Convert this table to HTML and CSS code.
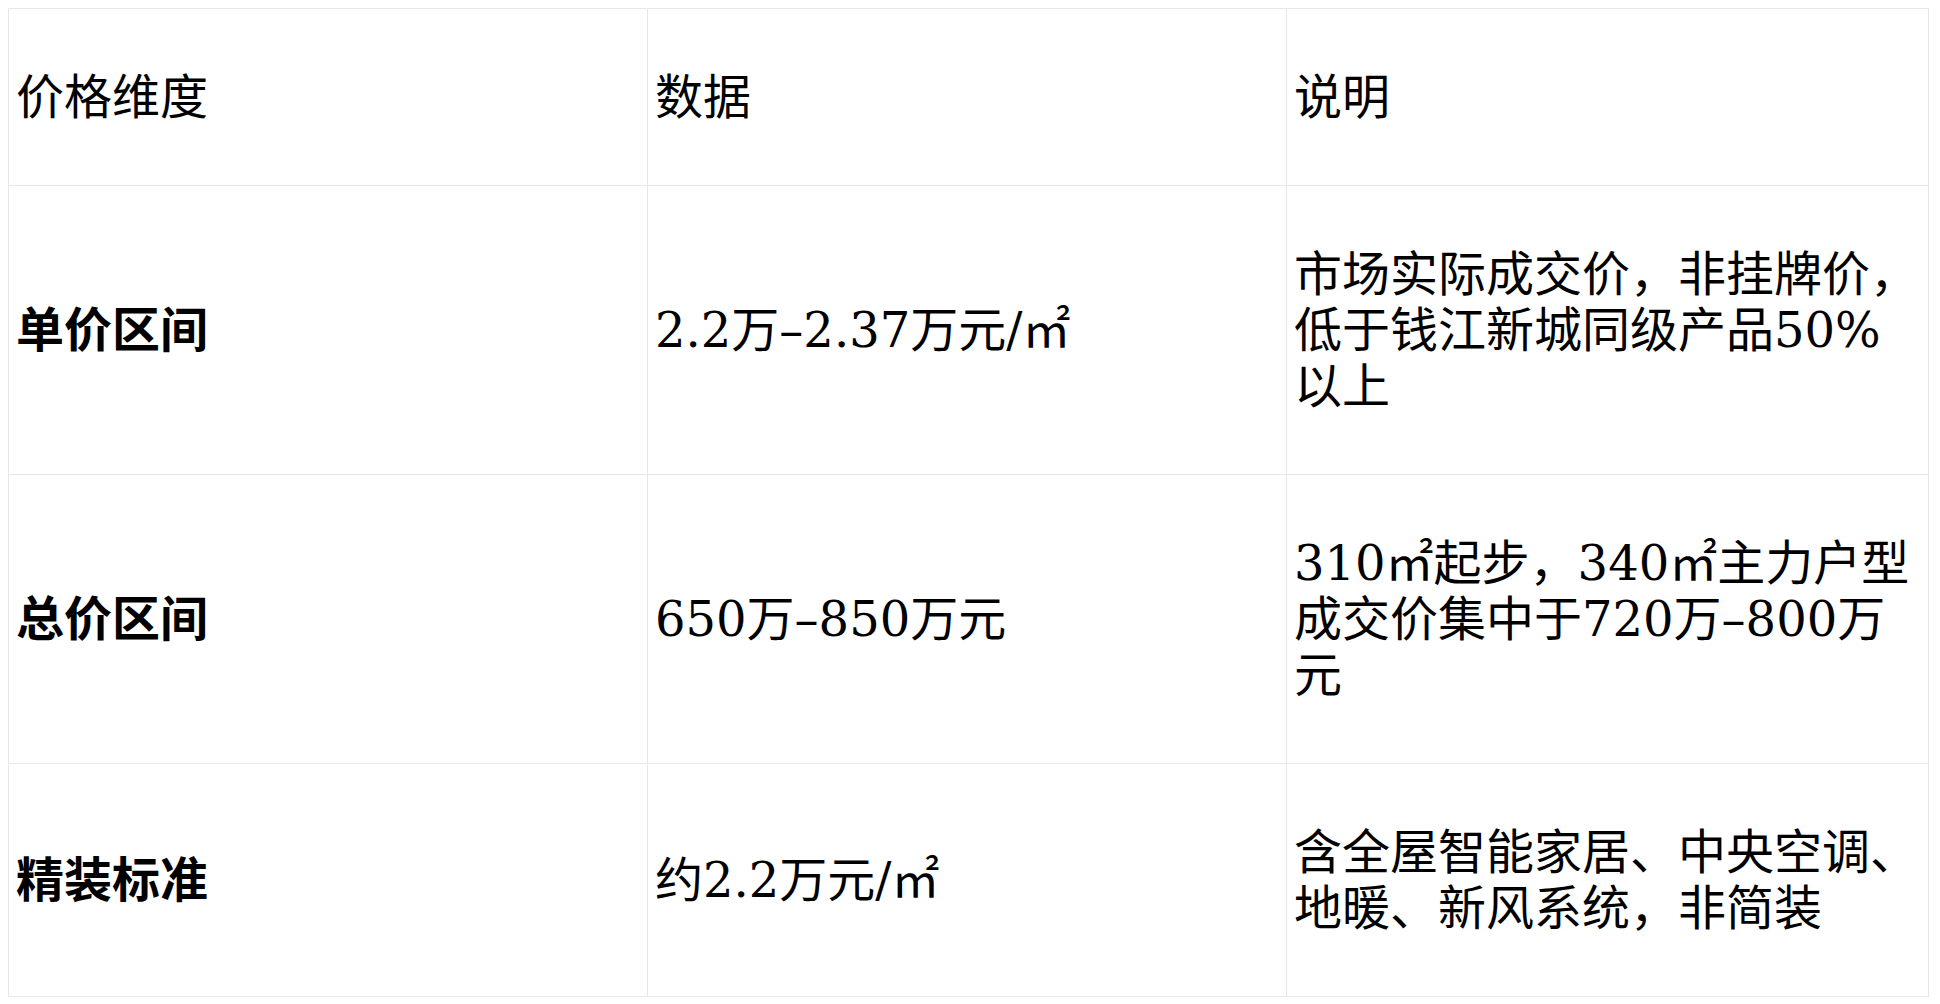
FILE: index.html
```html
<!DOCTYPE html>
<html lang="zh-CN">
<head>
<meta charset="utf-8">
<title>价格维度</title>
<link rel="stylesheet" href="styles.css">
</head>
<body>
<table class="price-table">
  <colgroup>
    <col class="col-dim">
    <col class="col-data">
    <col class="col-note">
  </colgroup>
  <tr>
    <td>价格维度</td>
    <td>数据</td>
    <td>说明</td>
  </tr>
  <tr>
    <td class="dim">单价区间</td>
    <td>2.2万–2.37万元/㎡</td>
    <td>市场实际成交价，非挂牌价，低于钱江新城同级产品50%以上</td>
  </tr>
  <tr>
    <td class="dim">总价区间</td>
    <td>650万–850万元</td>
    <td>310㎡起步，340㎡主力户型成交价集中于720万–800万元</td>
  </tr>
  <tr>
    <td class="dim">精装标准</td>
    <td>约2.2万元/㎡</td>
    <td>含全屋智能家居、中央空调、地暖、新风系统，非简装</td>
  </tr>
</table>
</body>
</html>
```
FILE: styles.css
```css
body {
  margin: 8px;
  background: #ffffff;
  color: #000000;
  font-family: "DejaVu Serif", "Noto Sans CJK SC", serif;
}

.price-table {
  width: 1920px;
  border-collapse: collapse;
  table-layout: fixed;
  font-size: 48px;
  line-height: 56px;
}

.col-dim {
  width: 639px;
}

.col-data {
  width: 639px;
}

.col-note {
  width: 642px;
}

.price-table td {
  border: 1px solid #e5e7eb;
  padding: 60px 6px 60px 7px;
  vertical-align: middle;
  text-align: left;
}

.price-table .dim {
  font-weight: 700;
}
```
